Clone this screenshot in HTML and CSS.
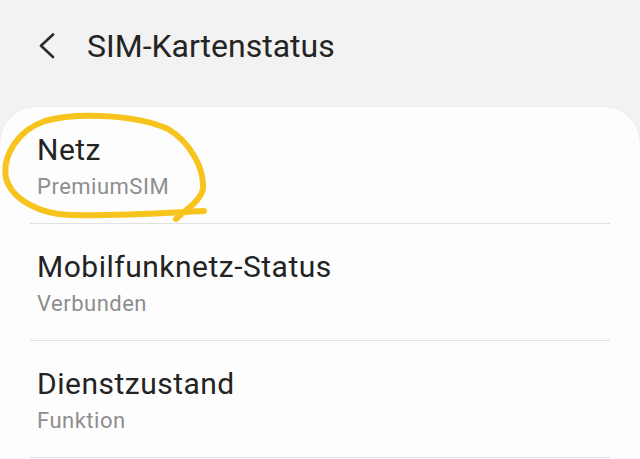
FILE: index.html
```
<!DOCTYPE html>
<html lang="de">
<head>
<meta charset="utf-8">
<title>SIM-Kartenstatus</title>
<link rel="stylesheet" href="styles.css">
</head>
<body>
<div class="screen">
  <header class="appbar">
    <span class="back" aria-label="Zurück">
      <svg width="20" height="26" viewBox="0 0 20 26"><path d="M15 1.5 L3 12.8 L15 24" fill="none" stroke="#2a2a2a" stroke-width="2.6" stroke-linecap="round" stroke-linejoin="round"/></svg>
    </span>
    <h1 class="title">SIM-Kartenstatus</h1>
  </header>
  <main class="card">
    <div class="row">
      <div class="row-title">Netz</div>
      <div class="row-sub">PremiumSIM</div>
    </div>
    <div class="row">
      <div class="row-title">Mobilfunknetz-Status</div>
      <div class="row-sub">Verbunden</div>
    </div>
    <div class="row">
      <div class="row-title">Dienstzustand</div>
      <div class="row-sub">Funktion</div>
    </div>
  </main>
  <svg class="scribble" width="640" height="459" viewBox="0 0 640 459">
    <path d="M204 211 C180 212, 120 216, 70 215 C40 214, 12 200, 6 178 C2 156, 18 130, 45 121 C80 111, 140 116, 168 129 C190 142, 204 168, 203 188 C202 200, 185 210, 176 219" fill="none" stroke="#f6c41c" stroke-width="6" stroke-linecap="round" stroke-linejoin="round"/>
  </svg>
</div>
</body>
</html>
```
FILE: styles.css
```
html, body {
  margin: 0;
  padding: 0;
  background: #f2f2f2;
}
.screen {
  position: relative;
  width: 640px;
  height: 459px;
  overflow: hidden;
  font-family: Roboto, "Liberation Sans", sans-serif;
}
.appbar {
  display: flex;
  align-items: center;
  height: 40px;
  padding: 26px 0 41px 38px;
}
.back {
  display: flex;
  width: 49px;
  height: 26px;
}
.title {
  margin: 0;
  font-size: 32px;
  line-height: 40px;
  font-weight: 400;
  color: #242424;
}
.card {
  background: #fdfdfd;
  border-radius: 36px 36px 0 0;
  height: 352px;
  box-shadow: 0 0 1px rgba(0,0,0,0.12);
}
.row {
  margin: 0 30px;
  padding: 25px 0 21px 7px;
  border-bottom: 1px solid #e1e1e1;
}
.row-title {
  font-size: 30px;
  line-height: 36px;
  letter-spacing: 0.5px;
  color: #232323;
}
.row-sub {
  margin-top: 4px;
  font-size: 22px;
  line-height: 30px;
  letter-spacing: 0.5px;
  color: #8e8e8e;
}
.scribble {
  position: absolute;
  left: 0;
  top: 0;
  pointer-events: none;
}
```
